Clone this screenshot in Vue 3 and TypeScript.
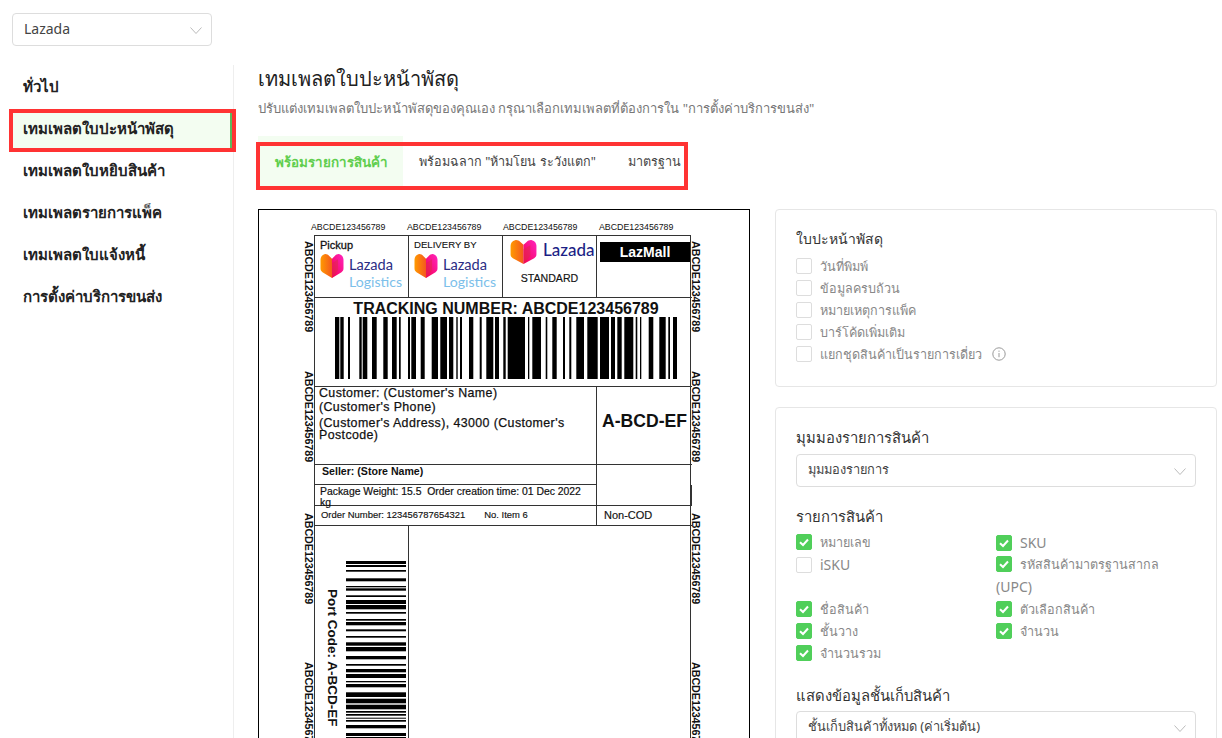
<script setup lang="ts">
interface Check {
  label: string
  checked: boolean
  latin?: boolean
  suffix?: string
}

const navItems = [
  'ทั่วไป',
  'เทมเพลตใบปะหน้าพัสดุ',
  'เทมเพลตใบหยิบสินค้า',
  'เทมเพลตรายการแพ็ค',
  'เทมเพลตใบแจ้งหนี้',
  'การตั้งค่าบริการขนส่ง',
]

const tabs = ['พร้อมรายการสินค้า', 'พร้อมฉลาก "ห้ามโยน ระวังแตก"', 'มาตรฐาน']

const labelChecks = ['วันที่พิมพ์', 'ข้อมูลครบถ้วน', 'หมายเหตุการแพ็ค', 'บาร์โค้ดเพิ่มเติม']

const itemChecks: Check[] = [
  { label: 'หมายเลข', checked: true },
  { label: 'SKU', checked: true, latin: true },
  { label: 'iSKU', checked: false, latin: true },
  { label: 'รหัสสินค้ามาตรฐานสากล', checked: true, suffix: '(UPC)' },
  { label: 'ชื่อสินค้า', checked: true },
  { label: 'ตัวเลือกสินค้า', checked: true },
  { label: 'ชั้นวาง', checked: true },
  { label: 'จำนวน', checked: true },
  { label: 'จำนวนรวม', checked: true },
]

const code = 'ABCDE123456789'

// start/end of each bar, in px from the left of the barcode
const trackingBars = [
  [0, 4.3], [5.3, 8.7], [13, 15], [24.3, 26.7], [27.7, 32.3], [37, 41.7], [48.3, 52.7], [57, 61.7],
  [64, 65.7], [73, 75], [76.3, 81], [85.7, 89.7], [96.7, 103], [105.3, 112], [114, 118.3], [121.3, 122.7],
  [125, 127], [134, 138.3], [144.7, 146.7], [151.3, 158.3], [160, 164], [168.3, 170.7], [172.7, 190],
  [193, 194.3], [197.3, 206], [210.7, 212.3], [217.3, 221.7], [228, 230], [234.3, 236.3], [241.3, 249],
  [252.3, 262.7], [265, 274], [276, 280], [282.3, 286.7], [289.3, 298.3], [300.7, 302.3], [305, 306.3],
  [313.7, 318.3], [324.3, 330.7], [333.3, 335], [338, 342],
]

// start/end of each bar, in px from the top of the barcode
const portBars = [
  [0, 3], [4, 6], [9, 10.7], [17.3, 20.3], [25, 26.3], [27.3, 29.7], [34.3, 36], [39, 43], [44, 48.3],
  [51, 52.7], [58, 59.7], [61, 64.3], [68.3, 70.3], [75, 76.7], [81.3, 84.7], [86, 90.3], [95, 98.3],
  [103, 104.7], [108, 111.3], [113, 117], [120, 121.3], [123, 126.3], [131.3, 136], [137.7, 142.3],
  [143.7, 148.3], [150, 151.7], [153, 154.7], [156.7, 157.7], [159, 160.7], [164, 167.3], [172, 175],
]
</script>

<template>
  <div class="page">
    <div class="store-row">
      <div class="select store-select">
        <span>Lazada</span>
        <svg class="chevron" viewBox="0 0 12 7"><path d="M.5.5 6 6.5 11.5.5" /></svg>
      </div>
    </div>

    <div class="layout">
      <nav class="sidebar">
        <a v-for="(item, i) in navItems" :key="item" class="nav-item" :class="{ active: i === 1 }">{{ item }}</a>
      </nav>

      <main class="content">
        <h1 class="title">เทมเพลตใบปะหน้าพัสดุ</h1>
        <p class="subtitle">ปรับแต่งเทมเพลตใบปะหน้าพัสดุของคุณเอง กรุณาเลือกเทมเพลตที่ต้องการใน "การตั้งค่าบริการขนส่ง"</p>

        <div class="tabs">
          <div v-for="(tab, i) in tabs" :key="tab" class="tab" :class="{ active: i === 0 }">{{ tab }}</div>
        </div>

        <div class="columns">
          <section class="paper">
            <div class="top-codes">
              <span v-for="n in 4" :key="n">{{ code }}</span>
            </div>
            <div class="paper-body">
              <div class="strip">
                <span v-for="n in 4" :key="n" class="side-code">{{ code }}</span>
              </div>

              <div class="sheet">
                <div class="cell head">
                  <div class="pickup">Pickup</div>
                  <div class="logo-line">
                    <svg class="heart" viewBox="0 0 24 22" preserveAspectRatio="none">
                      <defs>
                        <linearGradient id="hl" x1="0" x2="1" y1="0" y2="0">
                          <stop offset="0" stop-color="#ff9a00" />
                          <stop offset="1" stop-color="#f4581e" />
                        </linearGradient>
                        <linearGradient id="hr" x1="0" x2="1" y1="1" y2="0">
                          <stop offset="0" stop-color="#f5004f" />
                          <stop offset="1" stop-color="#ff24c0" />
                        </linearGradient>
                      </defs>
                      <path fill="url(#hl)" d="M12 22 2.500 17C1 16 .5 15 .5 13.500V6C.5 3.500 2 1.500 4.500 1 6.500.7 8 1.500 9 2.500L12 5Z" />
                      <path fill="url(#hr)" d="M12 22 21.500 17C23 16 23.500 15 23.500 13.500V6C23.500 3.500 22 1.500 19.500 1 17.500.7 16 1.500 15 2.500L12 5Z" />
                      <path fill="#e0284a" opacity=".55" d="M12 9 18 5.500V15L12 22Z" />
                    </svg>
                    <div class="logo-text">
                      <span class="lz">Lazada</span>
                      <span class="lg">Logistics</span>
                    </div>
                  </div>
                </div>
                <div class="cell head">
                  <div class="delivery">DELIVERY BY</div>
                  <div class="logo-line">
                    <svg class="heart" viewBox="0 0 24 22" preserveAspectRatio="none">
                      <path fill="url(#hl)" d="M12 22 2.500 17C1 16 .5 15 .5 13.500V6C.5 3.500 2 1.500 4.500 1 6.500.7 8 1.500 9 2.500L12 5Z" />
                      <path fill="url(#hr)" d="M12 22 21.500 17C23 16 23.500 15 23.500 13.500V6C23.500 3.500 22 1.500 19.500 1 17.500.7 16 1.500 15 2.500L12 5Z" />
                      <path fill="#e0284a" opacity=".55" d="M12 9 18 5.500V15L12 22Z" />
                    </svg>
                    <div class="logo-text">
                      <span class="lz">Lazada</span>
                      <span class="lg">Logistics</span>
                    </div>
                  </div>
                </div>
                <div class="cell head standard">
                  <div class="standard-logo">
                    <svg class="heart big" viewBox="0 0 24 22" preserveAspectRatio="none">
                      <path fill="url(#hl)" d="M12 22 2.500 17C1 16 .5 15 .5 13.500V6C.5 3.500 2 1.500 4.500 1 6.500.7 8 1.500 9 2.500L12 5Z" />
                      <path fill="url(#hr)" d="M12 22 21.500 17C23 16 23.500 15 23.500 13.500V6C23.500 3.500 22 1.500 19.500 1 17.500.7 16 1.500 15 2.500L12 5Z" />
                      <path fill="#e0284a" opacity=".55" d="M12 9 18 5.500V15L12 22Z" />
                    </svg>
                    <span class="lz big">Lazada</span>
                  </div>
                  <div class="standard-text">STANDARD</div>
                </div>
                <div class="cell head last">
                  <div class="lazmall">LazMall</div>
                </div>

                <div class="cell tracking">
                  <div class="tracking-no">TRACKING NUMBER: ABCDE123456789</div>
                  <svg class="barcode" width="342" height="62">
                    <rect v-for="b in trackingBars" :key="b[0]" :x="b[0]" y="0" :width="b[1] - b[0]" height="62" />
                  </svg>
                </div>

                <div class="cell customer">
                  <div class="c-name">Customer: (Customer's Name)</div>
                  <div class="c-phone">(Customer's Phone)</div>
                  <div class="c-addr">(Customer's Address), 43000 (Customer's Postcode)</div>
                </div>
                <div class="cell sort-code last">A-BCD-EF</div>

                <div class="cell seller">Seller: (Store Name)</div>
                <div class="cell blank last"></div>
                <div class="cell weight">Package Weight: 15.5 &nbsp;Order creation time: 01 Dec 2022 kg</div>

                <div class="cell order">
                  <span>Order Number: 123456787654321</span>
                  <span>No. Item 6</span>
                </div>
                <div class="cell cod last">Non-COD</div>

                <div class="cell port">
                  <span class="port-code">Port Code: A-BCD-EF</span>
                  <svg class="port-bars" width="60" height="214">
                    <rect v-for="b in portBars" :key="b[0]" x="0" :y="b[0]" width="60" :height="b[1] - b[0]" />
                    <rect v-for="b in portBars" :key="b[0]" x="0" :y="b[0] + 176" width="60" :height="b[1] - b[0]" />
                  </svg>
                </div>
                <div class="cell rest last"></div>
              </div>

              <div class="strip">
                <span v-for="n in 4" :key="n" class="side-code">{{ code }}</span>
              </div>
            </div>
          </section>

          <aside class="settings">
            <section class="card first-card">
              <h3 class="card-title small">ใบปะหน้าพัสดุ</h3>
              <label v-for="item in labelChecks" :key="item" class="check">
                <span class="box"></span>{{ item }}
              </label>
              <label class="check">
                <span class="box"></span>แยกชุดสินค้าเป็นรายการเดี่ยว
                <svg class="info" viewBox="0 0 14 14">
                  <circle cx="7" cy="7" r="6.2" />
                  <path d="M7 6v4.200M7 3.600v1.200" />
                </svg>
              </label>
            </section>

            <section class="card">
              <h3 class="card-title">มุมมองรายการสินค้า</h3>
              <div class="select wide">
                <span>มุมมองรายการ</span>
                <svg class="chevron" viewBox="0 0 12 7"><path d="M.5.5 6 6.5 11.5.5" /></svg>
              </div>

              <h3 class="card-title group">รายการสินค้า</h3>
              <div class="check-grid">
                <label v-for="item in itemChecks" :key="item.label" class="check" :class="{ latin: item.latin }">
                  <span class="box" :class="{ on: item.checked }">
                    <svg v-if="item.checked" viewBox="0 0 16 16"><path d="M4 8.200 7 11l5-5.500" /></svg>
                  </span>{{ item.label }}
                  <span v-if="item.suffix" class="suffix">{{ item.suffix }}</span>
                </label>
              </div>

              <h3 class="card-title group2">แสดงข้อมูลชั้นเก็บสินค้า</h3>
              <div class="select wide">
                <span>ชั้นเก็บสินค้าทั้งหมด (ค่าเริ่มต้น)</span>
                <svg class="chevron" viewBox="0 0 12 7"><path d="M.5.5 6 6.5 11.5.5" /></svg>
              </div>
            </section>
          </aside>
        </div>
      </main>
    </div>
  </div>
</template>

<style>
html,
body {
  margin: 0;
  background: #fff;
  overflow: hidden;
}
</style>

<style scoped>
.page {
  height: 738px;
  overflow: hidden;
  font-family: "Noto Sans", "Open Sans", sans-serif;
  font-size: 14px;
  color: #333;
  box-sizing: border-box;
  padding: 13px 5px 0 12px;
}

.store-row {
  height: 52px;
}

.select {
  display: flex;
  align-items: center;
  justify-content: space-between;
  height: 33px;
  box-sizing: border-box;
  padding: 0 9px 2px 11px;
  border: 1px solid #ddd;
  border-radius: 4px;
  color: #444;
  background: #fff;
}

.store-select {
  width: 200px;
}

.chevron {
  width: 12px;
  height: 7px;
  margin-top: 4px;
  fill: none;
  stroke: #bbb;
}

.layout {
  display: flex;
  height: 673px;
}

.sidebar {
  width: 222px;
  flex: none;
  display: flex;
  flex-direction: column;
  gap: 7px;
  border-right: 1px solid #eee;
  padding-top: 4px;
  box-sizing: border-box;
}

.nav-item {
  height: 35px;
  line-height: 35px;
  padding-left: 11px;
  margin-right: 2px;
  font-weight: 600;
  font-size: 15px;
  color: #222;
}

.nav-item.active {
  margin: 2px 1px -2px;
  line-height: 31px;
  padding-left: 10px;
  background: #f3fdf1;
  border-right: 2px solid #5cb85c;
  outline: 4px solid #ff3333;
}

.content {
  flex: 1;
  padding-left: 24px;
  min-width: 0;
}

.title {
  margin: 0;
  font-size: 20px;
  line-height: 28px;
  font-weight: 500;
  color: #222;
}

.subtitle {
  margin: 5px 0 0;
  font-size: 13px;
  line-height: 20px;
  color: #777;
}

.tabs {
  position: relative;
  display: flex;
  height: 51px;
  margin-top: 18px;
}

/* red marker drawn over the tab row */
.tabs::after {
  content: "";
  position: absolute;
  left: -2px;
  top: 6px;
  width: 432px;
  height: 48px;
  box-sizing: border-box;
  border: 4px solid #ff3333;
}

.tab {
  padding: 0 15px 0 17px;
  line-height: 52px;
  box-sizing: border-box;
  font-size: 12.6px;
  color: #444;
  white-space: nowrap;
}

.tab:nth-child(2) {
  padding-left: 16px;
}

.tab.active {
  font-size: 13.4px;
  color: #5fce4e;
  font-weight: 700;
  background: #f3fdf1;
}

.columns {
  display: flex;
  gap: 25px;
  margin-top: 22px;
  align-items: flex-start;
}

.paper {
  width: 492px;
  height: 560px;
  flex: none;
  box-sizing: border-box;
  border: 1px solid #000;
  font-family: "Liberation Sans", Arial, sans-serif;
  color: #111;
  overflow: hidden;
}

.top-codes {
  display: flex;
  gap: 22px;
  padding: 12px 0 0 52px;
  height: 25px;
  box-sizing: border-box;
  font-size: 8.8px;
  line-height: 11px;
}

.top-codes span {
  width: 74px;
  white-space: nowrap;
}

.paper-body {
  display: flex;
  padding-left: 43px;
}

.strip {
  width: 12px;
  flex: none;
  padding-top: 6px;
  display: flex;
  flex-direction: column;
}

.strip:last-child {
  width: 10px;
}

.strip:first-child .side-code {
  margin-left: -1px;
}

.side-code {
  writing-mode: vertical-rl;
  font-size: 10.8px;
  font-weight: 700;
  line-height: 11px;
  height: 91px;
  letter-spacing: -.1px;
  white-space: nowrap;
}

.side-code:nth-child(2) {
  margin-top: 39px;
}

.side-code:nth-child(3) {
  margin-top: 51px;
}

.side-code:nth-child(4) {
  margin-top: 58px;
}

.sheet {
  width: 377px;
  flex: none;
  display: grid;
  grid-template-columns: 94px 94px 94px 95px;
  grid-template-rows: 62px 89px 78px 20px 21px 20px 220px;
  border: solid #333;
  border-width: 1px 1px 0 1px;
  box-sizing: border-box;
}

.cell {
  border-right: 1px solid #333;
  border-bottom: 1px solid #333;
  box-sizing: border-box;
  min-width: 0;
}

.cell.last {
  border-right: 0;
}

.head {
  padding: 3px 0 0 5px;
}

.pickup {
  font-size: 11px;
  font-weight: 500;
  line-height: 12px;
  -webkit-text-stroke: .3px #111;
}

.delivery {
  font-size: 9.6px;
  line-height: 12px;
  -webkit-text-stroke: .1px #111;
}

.logo-line {
  display: flex;
  gap: 5px;
  margin-top: 2px;
}

.heart {
  width: 24px;
  height: 25px;
  flex: none;
}

.heart.big {
  width: 27px;
  height: 25px;
}

.logo-text {
  display: flex;
  flex-direction: column;
  margin-top: 3px;
}

.lz {
  font-family: Lato, sans-serif;
  font-size: 14.6px;
  line-height: 17px;
  color: #2b2d84;
}

.lz.big {
  font-size: 17px;
  font-weight: 500;
  color: #1c1f86;
  margin-top: -4px;
}

.lg {
  font-family: Lato, sans-serif;
  font-size: 14.1px;
  line-height: 17px;
  color: #7cc0ea;
}

.standard {
  padding: 0;
}

.standard-logo {
  display: flex;
  align-items: center;
  gap: 6px;
  padding: 3px 0 0 7px;
}

.standard-text {
  margin-top: 8px;
  text-align: center;
  font-size: 10.6px;
  line-height: 12px;
  -webkit-text-stroke: .15px #111;
}

.lazmall {
  margin: 3px 2px 0 -2px;
  height: 20px;
  line-height: 20px;
  background: #000;
  color: #fff;
  text-align: center;
  font-size: 14px;
  font-weight: 700;
}

.tracking {
  grid-column: 1 / -1;
  border-right: 0;
  padding-left: 20px;
  text-align: center;
}

.tracking-no {
  height: 19px;
  padding-right: 15px;
  font-size: 16px;
  line-height: 21px;
  font-weight: 700;
  white-space: nowrap;
}

.barcode {
  display: block;
}

.customer {
  grid-column: 1 / 4;
  padding: 0 0 0 4px;
  margin-top: -1px;
  font-size: 12.4px;
  line-height: 12px;
  -webkit-text-stroke: .25px #111;
  letter-spacing: .4px;
}

.c-name,
.c-phone {
  line-height: 14px;
}

.c-addr {
  margin-top: 3px;
}

.sort-code {
  display: flex;
  align-items: center;
  padding: 0 0 8px 5px;
  font-size: 17.6px;
  font-weight: 700;
  white-space: nowrap;
}

.seller {
  grid-column: 1 / 4;
  padding: 0 0 0 7px;
  font-size: 10.6px;
  line-height: 13px;
  font-weight: 700;
}

.blank {
  position: relative;
  grid-column: 4;
  grid-row: 4 / 6;
}

.blank::after {
  content: "";
  position: absolute;
  right: 0;
  top: 20px;
  bottom: -1px;
  width: 1px;
  background: #333;
}

.weight {
  grid-column: 1 / 4;
  padding: 1px 6px 0 5px;
  font-size: 10.4px;
  line-height: 11px;
  -webkit-text-stroke: .2px #111;
}

.order {
  grid-column: 1 / 4;
  display: flex;
  gap: 19px;
  padding: 3px 0 0 6px;
  font-size: 9.450px;
  line-height: 11px;
  -webkit-text-stroke: .15px #111;
}

.cod {
  padding: 3px 0 0 7px;
  font-size: 11px;
  line-height: 13px;
  -webkit-text-stroke: .15px #111;
}

.port {
  grid-column: 1;
  display: flex;
  gap: 7px;
  padding: 35px 0 0 10px;
}

.port-code {
  writing-mode: vertical-rl;
  font-size: 13.5px;
  font-weight: 700;
  line-height: 14px;
  margin-top: 28px;
  white-space: nowrap;
  height: 142px;
}

.port-bars {
  flex: none;
}

.rest {
  grid-column: 2 / -1;
}

.settings {
  width: 442px;
  flex: none;
  display: flex;
  flex-direction: column;
  gap: 20px;
}

.card {
  border: 1px solid #e6e6e6;
  border-radius: 4px;
  box-sizing: border-box;
  padding: 19px 20px 0;
}

.first-card {
  height: 178px;
}

.card-title {
  margin: 0;
  font-size: 14.8px;
  line-height: 20px;
  font-weight: 500;
  color: #333;
  padding-bottom: 7px;
}

.card-title.small {
  font-size: 14px;
}

.group {
  margin-top: 19px;
  padding-bottom: 6px;
}

.group2 {
  margin-top: 20px;
  padding-bottom: 6px;
}

.check {
  display: block;
  font-size: 12.6px;
  line-height: 22px;
  color: #888;
}

.check.latin {
  font-size: 14px;
}

.suffix {
  font-size: 14px;
}

.box {
  display: inline-block;
  width: 16px;
  height: 16px;
  box-sizing: border-box;
  margin-right: 8px;
  vertical-align: -3px;
  border: 1px solid #ddd;
  border-radius: 2px;
  background: #fff;
}

.box.on {
  background: #50cf5a;
  border-color: #50cf5a;
}

.box svg {
  display: block;
  width: 16px;
  height: 16px;
  margin: -1px;
  fill: none;
  stroke: #fff;
  stroke-width: 2;
}

.info {
  width: 14px;
  height: 14px;
  margin-left: 7px;
  vertical-align: -2px;
  fill: none;
  stroke: #999;
}

.check-grid {
  display: grid;
  grid-template-columns: 200px 1fr;
}

.wide {
  width: 400px;
  font-size: 12.8px;
}
</style>
